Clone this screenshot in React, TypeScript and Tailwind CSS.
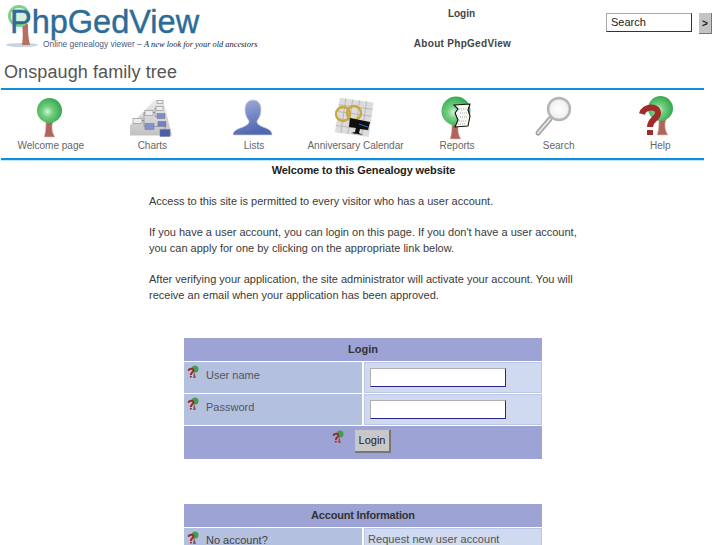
import type { ReactNode } from "react";

const labelFont = "font-['Liberation_Sans',Arial,sans-serif]";

function Crown({ id, cx, cy, r }: { id: string; cx: number; cy: number; r: number }) {
  return (
    <>
      <defs>
        <radialGradient id={id} cx="0.42" cy="0.55" r="0.62">
          <stop offset="0" stopColor="#d8f2d8" />
          <stop offset="0.35" stopColor="#70cf80" />
          <stop offset="1" stopColor="#2fa348" />
        </radialGradient>
      </defs>
      <circle cx={cx} cy={cy} r={r} fill={`url(#${id})`} />
    </>
  );
}

function Trunk({ x, y, s = 1 }: { x: number; y: number; s?: number }) {
  return (
    <path
      transform={`translate(${x} ${y}) scale(${s})`}
      d="M-3 -12 L-2 -4 L-1 -8 L1 -2 L5 -6 L3 2 C3 7 4 10 6 13 L-5 13 C-3 8 -3 0 -3 -12 Z"
      fill="#b0655c"
      stroke="#e5c8c4"
      strokeWidth="0.6"
    />
  );
}

function TreeIcon() {
  return (
    <svg width="44" height="44" viewBox="0 0 44 44">
      <Trunk x={20} y={28} />
      <Crown id="tree-a" cx={20.5} cy={14.5} r={12.5} />
    </svg>
  );
}

function ChartsIcon() {
  const boxes = [
    [4, 21, 9, 5, "#ececf0"],
    [16, 13, 8, 5, "#ececf0"],
    [16, 26, 9, 6, "#8090d0"],
    [27, 9, 7, 4, "#ececf0"],
    [28, 16, 8, 5, "#7d8ccc"],
    [29, 24, 8, 5, "#6f80c4"],
    [31, 32, 10, 7, "#4a5fae"],
    [28, 3, 6, 3, "#ececf0"],
  ] as const;
  return (
    <svg width="44" height="44" viewBox="0 0 44 44" className="overflow-visible">
      <defs>
        <linearGradient id="chart-bg" x1="0" y1="0" x2="0" y2="1">
          <stop offset="0" stopColor="#ececec" />
          <stop offset="1" stopColor="#c2c2c2" />
        </linearGradient>
      </defs>
      <g transform="translate(-1 1.5)">
        <path d="M26 2 L34 2 L43 38 L1 38 L1 28 Z" fill="url(#chart-bg)" />
        <path d="M13 23 H15 V15 H16 M13 23 H15 V29 H16 M24 15 H26 V11 H27 M24 15 H26 V19 H28 M25 29 H29 V27 M36 29 V32" fill="none" stroke="#8a8a8a" strokeWidth="0.7" />
        {boxes.map(([x, y, w, h, c], i) => (
          <rect key={i} x={x} y={y} width={w} height={h} fill={c} stroke="#77777f" strokeWidth="0.5" />
        ))}
      </g>
    </svg>
  );
}

function PersonIcon() {
  return (
    <svg width="44" height="44" viewBox="0 0 44 44" className="overflow-visible">
      <defs>
        <linearGradient id="person" x1="0" y1="0" x2="0.3" y2="1">
          <stop offset="0" stopColor="#a3aede" />
          <stop offset="1" stopColor="#5267b2" />
        </linearGradient>
      </defs>
      <path
        transform="translate(-1 2)"
        d="M22 2 C28 2 30 7 30 12 C30 17 28 20 26 23 C26 26 28 27 32 29 C38 31 41 33 41 37 L2 37 C2 33 6 31 12 29 C16 27 18 26 18 23 C16 20 14 17 14 12 C14 7 16 2 22 2 Z"
        fill="url(#person)"
        stroke="#cfcfd6"
        strokeWidth="0.7"
      />
    </svg>
  );
}

function CalendarIcon() {
  return (
    <svg width="44" height="44" viewBox="0 0 44 44" className="overflow-visible">
      <g transform="translate(0 1) rotate(8 22 22)">
        <rect x="4" y="3" width="34" height="35" fill="#dcdcdc" />
        <path d="M4 10H38M4 17H38M4 24H38M4 31H38M10 3V38M17 3V38M24 3V38M31 3V38" stroke="#b4b4b4" strokeWidth="0.8" />
      </g>
      <circle cx="10" cy="18" r="7" fill="none" stroke="#c9a93a" strokeWidth="2.4" />
      <circle cx="21" cy="17" r="7" fill="none" stroke="#c9a93a" strokeWidth="2.4" />
      <path d="M17 22 L37 26 L35 34 L27 33 L26 37 L30 39 L18 37 L22 36 L23 32 L16 31 Z" fill="#101010" />
      <path d="M26 28 L35 31" stroke="#2f6fb0" strokeWidth="1" />
    </svg>
  );
}

function ReportsIcon() {
  return (
    <svg width="44" height="44" viewBox="0 0 44 44">
      <Trunk x={20} y={30} />
      <Crown id="tree-b" cx={21} cy={15} r={14.5} />
      <path d="M19 9 L35 8 L33 14 L35 20 L33 30 L20 31 L23 24 L20 17 L23 13 Z" fill="#f8f8f4" stroke="#111" strokeWidth="1.1" />
      <path d="M24 13H32M25 17H33M25 21H32M24 25H31M23 28H30" stroke="#999" strokeWidth="0.8" strokeDasharray="1 1" />
    </svg>
  );
}

function SearchIcon() {
  return (
    <svg width="44" height="44" viewBox="0 0 44 44" className="overflow-visible">
      <defs>
        <radialGradient id="lens" cx="0.5" cy="0.5" r="0.55">
          <stop offset="0" stopColor="#ffffff" />
          <stop offset="0.7" stopColor="#f2f2f2" />
          <stop offset="1" stopColor="#c8c8c8" />
        </radialGradient>
      </defs>
      <path d="M13 23 L1 37" stroke="#a0a0a0" strokeWidth="5" strokeLinecap="round" />
      <path d="M13 23 L1 37" stroke="#e2e2e2" strokeWidth="2" strokeLinecap="round" />
      <circle cx="22" cy="13" r="11" fill="url(#lens)" stroke="#b5b5b5" strokeWidth="2.4" />
    </svg>
  );
}

function QuestionMark({ scale = 1 }: { scale?: number }) {
  return (
    <g transform={`scale(${scale})`}>
      <path d="M4 18 C6 10 20 9 20 17 C20 23 12 23 12 31" fill="none" stroke="#a32a2a" strokeWidth="6" />
      <rect x="9" y="34" width="6" height="5" fill="#a32a2a" />
    </g>
  );
}

function HelpIcon() {
  return (
    <svg width="44" height="44" viewBox="0 0 44 44">
      <Trunk x={24} y={26} />
      <Crown id="tree-c" cx={22.5} cy={12.5} r={12.5} />
      <QuestionMark />
    </svg>
  );
}

function SmallHelp() {
  return (
    <svg width="13" height="14" viewBox="0 0 13 14" className="shrink-0">
      <circle cx="8" cy="4" r="3.5" fill="#3f9f4f" />
      <path d="M7 6 L9 13 L6 13 Z" fill="#8f5a50" />
      <QuestionMark scale={0.32} />
    </svg>
  );
}

function NavItem({ icon, label }: { icon: ReactNode; label: string }) {
  return (
    <div className="flex flex-col items-center">
      <div className="h-[44px]">{icon}</div>
      <div className="text-[10px] leading-[12px] text-[#666]">{label}</div>
    </div>
  );
}

function FieldRow({ label }: { label: string }) {
  return (
    <div className="grid h-[31px] grid-cols-[178px_178px] gap-[2px]">
      <div className="flex bg-[#b4c0e0] pl-[3px] pt-[3px] text-[11px] text-[#555]">
        <SmallHelp />
        <span className="ml-[6px] mt-[3px] leading-[14px]">{label}</span>
      </div>
      <div className="border border-[#bcc7e6] bg-[#cfd9ef] pl-[5px] pt-[5px]">
        <div className="h-[19px] w-[136px] border border-b-[#27278f] border-l-[#b0b0b0] border-r-[#27278f] border-t-[#b0b0b0] bg-white" />
      </div>
    </div>
  );
}

export default function App() {
  return (
    <div className={`h-[545px] w-[727px] overflow-hidden bg-white ${labelFont}`}>
      <header className="flex h-[88px]">
        <div className="w-[340px] pl-[4px]">
          <div className="relative h-[53px]">
            <svg width="40" height="48" viewBox="0 0 40 48" className="absolute left-0 top-0">
              <ellipse cx="18" cy="45" rx="16" ry="2" fill="#c9d3e8" />
              <path d="M18 24 C19 32 19 38 18 45 L26 45 C24 38 24 30 24 24 Z" fill="#b5705f" />
              <circle cx="15" cy="16" r="9.5" fill="none" stroke="#7fd08a" strokeWidth="3" />
              <circle cx="15" cy="16" r="8" fill="#d6f0da" />
            </svg>
            <span className="absolute left-[6px] top-[3px] text-[32.5px] leading-[38px] text-[#2d6c98] [-webkit-text-stroke:0.4px_#2d6c98]">
              PhpGedView
            </span>
            <span className="absolute left-[39px] top-[38px] text-[8.4px] leading-[12px] text-[#4a5a80]">
              Online genealogy viewer –{" "}
              <span className="font-['Liberation_Serif',serif] italic text-[#222]">A new look for your old ancestors</span>
            </span>
          </div>
          <h1 className="pt-[8px] text-[18px] leading-[22px] tracking-[0.1px] text-[#555]">Onspaugh family tree</h1>
        </div>
        <nav className="flex w-[242px] flex-col items-center pl-[3px] pt-[8px] text-[10px] font-bold leading-[12px] text-[#444]">
          <span className="pr-[2px]">Login</span>
          <span className="mt-[18px] tracking-[0.3px]">About PhpGedView</span>
        </nav>
        <div className="flex items-start pl-[24px] pt-[13px]">
          <div className="flex h-[19px] w-[86px] items-center border border-b-[#27278f] border-l-[#aaa] border-r-[#27278f] border-t-[#aaa] pl-[4px] text-[11px] text-[#222]">
            Search
          </div>
          <button className="ml-[7px] h-[21px] w-[13px] border-b border-r border-[#777] bg-[#c4c4c4] text-[10px] font-bold text-[#222]">
            &gt;
          </button>
        </div>
      </header>

      <div className="ml-[1px] w-[703px] border-y-2 border-[#0f8fe0] shadow-[0_1px_0_#bfe6fb]">
        <div className="-ml-[1px] grid h-[68px] w-[711px] grid-cols-7 pt-[6px]">
          <NavItem icon={<TreeIcon />} label="Welcome page" />
          <NavItem icon={<ChartsIcon />} label="Charts" />
          <NavItem icon={<PersonIcon />} label="Lists" />
          <NavItem icon={<CalendarIcon />} label="Anniversary Calendar" />
          <NavItem icon={<ReportsIcon />} label="Reports" />
          <NavItem icon={<SearchIcon />} label="Search" />
          <NavItem icon={<HelpIcon />} label="Help" />
        </div>
      </div>

      <main>
        <h2 className="pt-[3px] text-center text-[11px] font-bold leading-[14px] tracking-[-0.1px] text-[#222]">
          Welcome to this Genealogy website
        </h2>
        <div className="ml-[149px] mt-[16px] w-[440px] text-[11px] leading-[16px] text-[#3a3a3a]">
          <p>Access to this site is permitted to every visitor who has a user account.</p>
          <p className="mt-[15px]">
            If you have a user account, you can login on this page. If you don't have a user account,
            <br />
            you can apply for one by clicking on the appropriate link below.
          </p>
          <p className="mt-[15px]">
            After verifying your application, the site administrator will activate your account. You will
            <br />
            receive an email when your application has been approved.
          </p>
        </div>

        <section className="ml-[184px] mt-[35px] flex w-[358px] flex-col gap-[1px]">
          <div className="flex h-[23px] items-center justify-center bg-[#9da3d4] text-[11px] font-bold text-[#333]">
            Login
          </div>
          <FieldRow label="User name" />
          <FieldRow label="Password" />
          <div className="flex h-[33px] items-start justify-center bg-[#9da3d4] pr-[3px] pt-[4px]">
            <SmallHelp />
            <button className="ml-[10px] h-[23px] w-[36px] border-b-2 border-r-2 border-b-[#777] border-r-[#777] bg-[#c8c8c8] text-[11px] text-[#222]">
              Login
            </button>
          </div>
        </section>

        <section className="ml-[184px] mt-[45px] flex w-[358px] flex-col gap-[1px]">
          <div className="flex h-[23px] items-center justify-center bg-[#9da3d4] text-[11px] font-bold tracking-[-0.2px] text-[#333]">
            Account Information
          </div>
          <div className="grid h-[31px] grid-cols-[178px_178px] gap-[2px]">
            <div className="flex bg-[#b4c0e0] pl-[3px] pt-[3px] text-[11px] text-[#444]">
              <SmallHelp />
              <span className="ml-[6px] mt-[2px] leading-[14px]">No account?</span>
            </div>
            <div className="border border-[#bcc7e6] bg-[#cfd9ef] pl-[3px] text-[11px] leading-[20px] tracking-[0.05px] text-[#555]">
              Request new user account
            </div>
          </div>
        </section>
      </main>
    </div>
  );
}
